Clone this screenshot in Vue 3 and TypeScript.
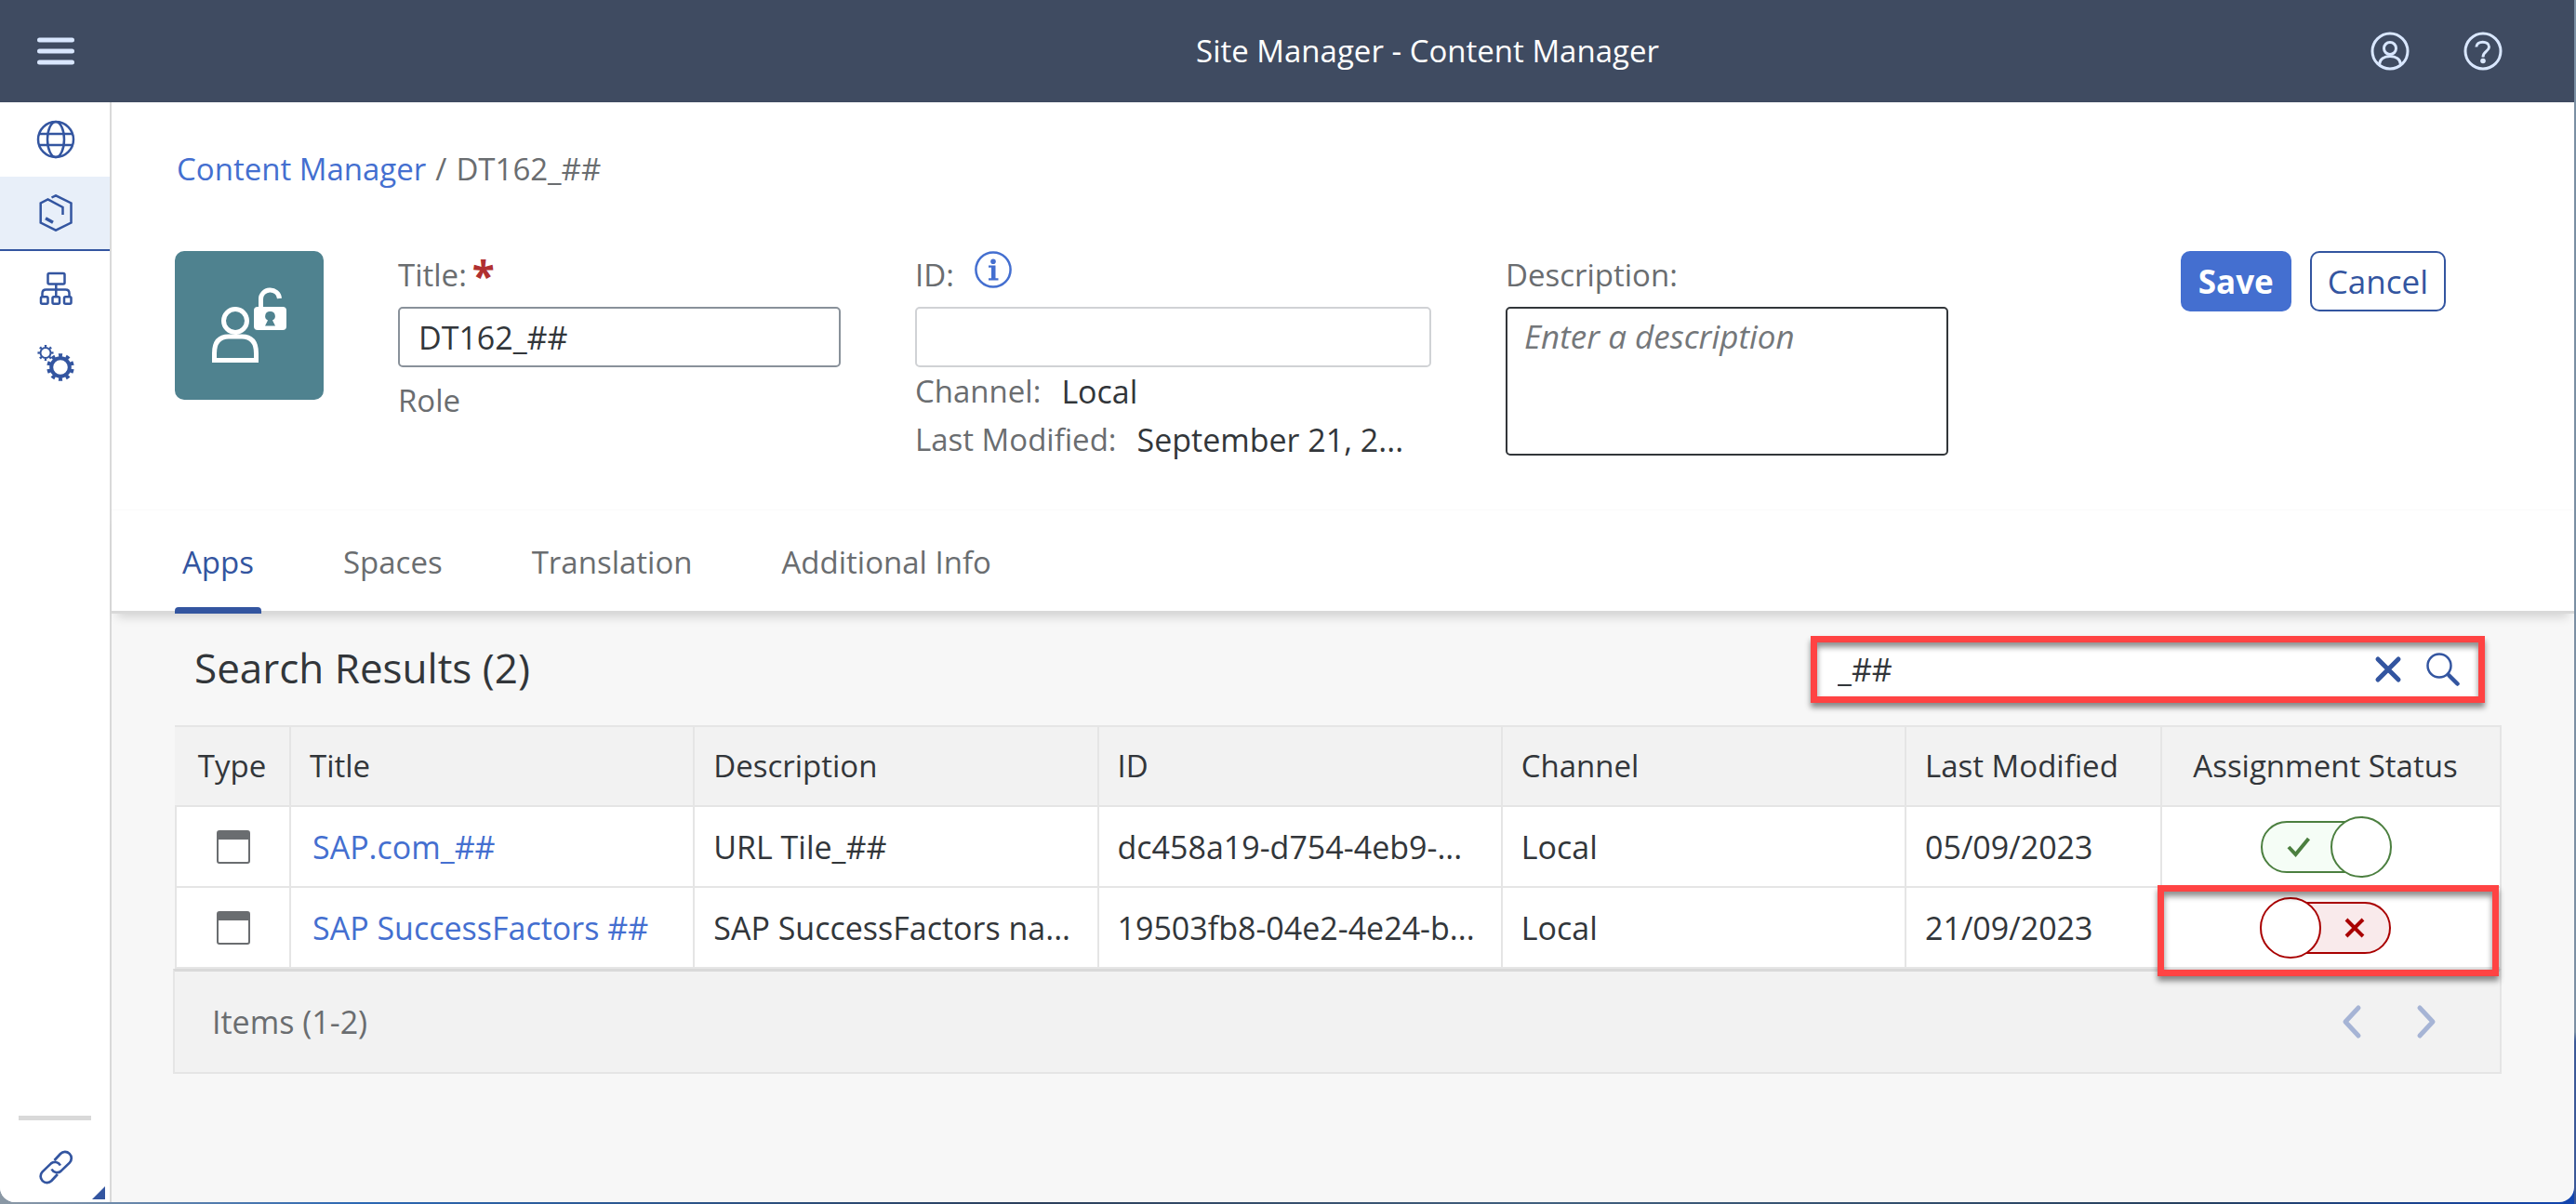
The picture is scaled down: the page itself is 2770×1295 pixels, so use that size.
<script setup lang="ts">
import { ref } from 'vue'

interface AppRow {
  title: string
  description: string
  id: string
  channel: string
  modified: string
  assigned: boolean
}

const title = ref('DT162_##')
const itemId = ref('')
const description = ref('')
const query = ref('_##')
const activeTab = ref('Apps')
const tabs: string[] = ['Apps', 'Spaces', 'Translation', 'Additional Info']

const rows = ref<AppRow[]>([
  {
    title: 'SAP.com_##',
    description: 'URL Tile_##',
    id: 'dc458a19-d754-4eb9-...',
    channel: 'Local',
    modified: '05/09/2023',
    assigned: true,
  },
  {
    title: 'SAP SuccessFactors ##',
    description: 'SAP SuccessFactors na...',
    id: '19503fb8-04e2-4e24-b...',
    channel: 'Local',
    modified: '21/09/2023',
    assigned: false,
  },
])
</script>

<template>
  <div class="window">
    <header class="shell">
      <div class="shell-start">
        <button class="icon-btn" type="button" aria-label="Menu">
          <svg width="40" height="40" viewBox="0 0 40 40" fill="none" stroke="currentColor" stroke-width="5" stroke-linecap="round">
            <path d="M2.500 8H37.500M2.500 20H37.500M2.500 32H37.500" />
          </svg>
        </button>
      </div>
      <h1 class="shell-title">Site Manager - Content Manager</h1>
      <div class="shell-end">
        <button class="icon-btn" type="button" aria-label="Profile">
          <svg width="42" height="42" viewBox="-1 -1 42 42" fill="none" stroke="currentColor" stroke-width="3">
            <circle cx="20" cy="20" r="19" />
            <circle cx="20" cy="17" r="6.500" />
            <path d="M8.500 34.500C9 28.500 14 25.500 20 25.500S31 28.500 31.500 34.500" />
          </svg>
        </button>
        <button class="icon-btn" type="button" aria-label="Help">
          <svg width="42" height="42" viewBox="-1 -1 42 42" fill="none" stroke="currentColor" stroke-width="3">
            <circle cx="20" cy="20" r="19" />
            <path d="M12.800 15.500C13 8.500 26.500 8.500 26.500 15.500C26.500 20.500 20 20 20 26.500" />
            <circle cx="20" cy="30.500" r="2.800" fill="currentColor" stroke="none" />
          </svg>
        </button>
      </div>
    </header>

    <div class="body">
      <nav class="side" aria-label="Main">
        <a class="side-item" href="#sites" aria-label="Site Directory">
          <svg width="42" height="42" viewBox="-1 -1 42 42" fill="none" stroke="currentColor" stroke-width="2.500">
            <circle cx="20" cy="20" r="19" />
            <ellipse cx="20" cy="20" rx="9" ry="19" />
            <path d="M2 14H38M2 26H38" />
          </svg>
        </a>
        <a class="side-item current" href="#content" aria-label="Content Manager">
          <svg width="40" height="40" viewBox="0 0 40 40" fill="none" stroke="currentColor" stroke-width="2.500">
            <path d="M15.500 3.500L20 1.300L36.500 9.500V30.500L20 38.700L3.700 30.500V9.500L11.500 5.300L27.500 14V22" />
            <path d="M9 25.800L17 30.200" stroke-width="3.500" />
          </svg>
        </a>
        <a class="side-item" href="#channels" aria-label="Channel Manager">
          <svg width="40" height="40" viewBox="0 0 40 40" fill="none" stroke="currentColor" stroke-width="2.500">
            <rect x="11.500" y="4" width="18" height="11.500" rx="1.500" />
            <path d="M20.300 15.500V29M5.500 29V25.500Q5.500 21.500 9.500 21.500H30.500Q34.500 21.500 34.500 25.500V29" />
            <rect x="4" y="29.300" width="7.500" height="7.500" rx="1.500" />
            <rect x="16.500" y="29.300" width="7.500" height="7.500" rx="1.500" />
            <rect x="29" y="29.300" width="7.500" height="7.500" rx="1.500" />
          </svg>
        </a>
        <a class="side-item" href="#settings" aria-label="Settings">
          <svg width="40" height="40" viewBox="0 0 40 40" fill="none" stroke="currentColor">
            <circle cx="9" cy="9.500" r="5.500" stroke-width="2" />
            <circle cx="9" cy="9.500" r="7.300" stroke-width="2.500" pathLength="16" stroke-dasharray="0.800 1.200" stroke-dashoffset="0.400" />
            <circle cx="25" cy="25" r="9.800" stroke-width="4" />
            <circle cx="25" cy="25" r="12.800" stroke-width="4" pathLength="20" stroke-dasharray="1 1" stroke-dashoffset="1.500" />
          </svg>
        </a>
        <div class="side-foot">
          <hr class="side-rule" />
          <a class="side-link" href="#links" aria-label="Useful Links">
            <svg width="40" height="40" viewBox="0 0 40 40" fill="none" stroke="currentColor" stroke-width="2.700">
              <path d="M18.500 13L25 6A6.800 6.800 0 0 1 34.800 15.600L25.500 24.600A6.500 6.500 0 0 1 15.500 22.500" />
              <path d="M18.500 13L25 6A6.800 6.800 0 0 1 34.800 15.600L25.500 24.600A6.500 6.500 0 0 1 15.500 22.500" transform="rotate(180 20.200 20.500)" />
            </svg>
          </a>
        </div>
      </nav>

      <main class="main">
        <section class="object">
          <nav class="crumbs" aria-label="Breadcrumb">
            <a href="#content">Content Manager</a>
            <span>/</span>
            <span>DT162_##</span>
          </nav>
          <form class="form" @submit.prevent>
            <div class="avatar">
              <svg viewBox="0 0 160 160" fill="none" stroke="#fff" stroke-width="5">
                <circle cx="65" cy="75" r="12.500" />
                <path d="M42.500 117.500V110Q42.500 92 58 92H72Q87.500 92 87.500 110V117.500Z" />
                <path d="M92.500 61V52A10 9.500 0 0 1 112.500 51" />
                <rect x="85" y="60" width="35" height="25" rx="4" fill="#fff" stroke="none" />
                <path d="M102.500 65A5 5 0 0 0 100 74.500L97 80.500H108L105 74.500A5 5 0 0 0 102.500 65Z" fill="#4f828f" stroke="none" />
              </svg>
            </div>
            <div class="field">
              <label class="label" for="title">Title:<span class="star">*</span></label>
              <input id="title" v-model="title" class="input" type="text" />
              <p class="line role">Role</p>
            </div>
            <div class="field">
              <div class="label">
                <label for="item-id">ID:</label>
                <button class="info" type="button" aria-label="About the ID">
                  <svg width="40" height="40" viewBox="0 0 40 40">
                    <circle cx="20" cy="20" r="18.600" fill="none" stroke="currentColor" stroke-width="2.500" />
                    <circle cx="20" cy="11.300" r="2.800" fill="currentColor" />
                    <path d="M15 15.500H22.500V29.300H25.500V31.500H15V29.300H18V17.700H15Z" fill="currentColor" />
                  </svg>
                </button>
              </div>
              <input id="item-id" v-model="itemId" class="input readonly" type="text" readonly />
              <p class="line pair"><span>Channel:</span><span class="value">Local</span></p>
              <p class="line pair"><span>Last Modified:</span><span class="value">September 21, 2...</span></p>
            </div>
            <div class="field">
              <label class="label" for="description">Description:</label>
              <textarea id="description" v-model="description" class="input area" placeholder="Enter a description"></textarea>
            </div>
            <div class="actions">
              <button class="btn primary" type="submit">Save</button>
              <button class="btn" type="button">Cancel</button>
            </div>
          </form>
        </section>

        <div class="tabs" role="tablist">
          <button
            v-for="tab in tabs"
            :key="tab"
            class="tab"
            :class="{ active: tab === activeTab }"
            type="button"
            role="tab"
            :aria-selected="tab === activeTab"
            @click="activeTab = tab"
          >{{ tab }}</button>
        </div>

        <section class="results">
          <div class="toolbar">
            <h2>Search Results (2)</h2>
            <div class="search marked">
              <input v-model="query" class="query" type="text" aria-label="Search" />
              <button class="search-btn" type="button" aria-label="Clear" @click="query = ''">
                <svg width="30" height="30" viewBox="0 0 30 30" fill="none" stroke="currentColor" stroke-width="5" stroke-linecap="round">
                  <path d="M4 4L26 26M26 4L4 26" />
                </svg>
              </button>
              <button class="search-btn" type="button" aria-label="Search">
                <svg width="36" height="36" viewBox="0 0 36 36" fill="none" stroke="currentColor" stroke-linecap="round">
                  <circle cx="14" cy="14" r="12.500" stroke-width="2.500" />
                  <path d="M24.500 24.500L33.500 33.500" stroke-width="4.500" />
                </svg>
              </button>
            </div>
          </div>

          <table class="table">
            <colgroup>
              <col class="c-type" /><col /><col /><col /><col /><col class="c-date" /><col class="c-status" />
            </colgroup>
            <thead>
              <tr>
                <th class="mid">Type</th>
                <th>Title</th>
                <th>Description</th>
                <th>ID</th>
                <th>Channel</th>
                <th>Last Modified</th>
                <th class="mid status">Assignment Status</th>
              </tr>
            </thead>
            <tbody>
              <tr v-for="row in rows" :key="row.id">
                <td class="mid">
                  <svg class="type-icon" width="36" height="36" viewBox="0 0 36 36">
                    <rect x="1" y="1" width="34" height="34" rx="2" fill="none" stroke="#6a6d70" stroke-width="2" />
                    <path d="M1 1H35V10H1Z" fill="#6a6d70" />
                  </svg>
                </td>
                <td><a href="#app">{{ row.title }}</a></td>
                <td>{{ row.description }}</td>
                <td>{{ row.id }}</td>
                <td>{{ row.channel }}</td>
                <td>{{ row.modified }}</td>
                <td class="mid status" :class="{ flagged: !row.assigned }">
                  <label class="switch" :class="row.assigned ? 'on' : 'off'">
                    <input v-model="row.assigned" type="checkbox" :aria-label="'Assign ' + row.title" />
                    <svg v-if="row.assigned" class="mark" width="26" height="24" viewBox="0 0 26 24" fill="none" stroke="currentColor" stroke-width="4">
                      <path d="M2 12L9.500 20L23.500 3" />
                    </svg>
                    <svg v-else class="mark" width="22" height="22" viewBox="0 0 22 22" fill="none" stroke="currentColor" stroke-width="4">
                      <path d="M2 2L20 20M20 2L2 20" />
                    </svg>
                    <span class="knob"></span>
                  </label>
                </td>
              </tr>
            </tbody>
          </table>

          <footer class="pager">
            <span>Items (1-2)</span>
            <div class="pager-nav">
              <button type="button" aria-label="Previous page" disabled>
                <svg width="22" height="38" viewBox="0 0 22 38" fill="none" stroke="currentColor" stroke-width="5" stroke-linecap="round" stroke-linejoin="round">
                  <path d="M18 4L4 19L18 34" />
                </svg>
              </button>
              <button type="button" aria-label="Next page" disabled>
                <svg width="22" height="38" viewBox="0 0 22 38" fill="none" stroke="currentColor" stroke-width="5" stroke-linecap="round" stroke-linejoin="round">
                  <path d="M4 4L18 19L4 34" />
                </svg>
              </button>
            </div>
          </footer>
        </section>
      </main>
    </div>
  </div>
</template>

<style>
body {
  margin: 0;
}
#app {
  box-sizing: border-box;
  min-height: 100vh;
  display: flex;
  padding: 0 2px 2px 0;
  background:
    linear-gradient(#7b8fa3 0 1110px, #3a5898 1120px) right / 2px 100% no-repeat,
    linear-gradient(90deg, #8b98a5, #2b68b4 14%, #2b3f5c 40%, #41607f 60%, #26405f 85%, #1245b0);
}
</style>

<style scoped>
.window {
  flex: 1;
  min-width: 0;
  display: flex;
  flex-direction: column;
  overflow: hidden;
  border-radius: 0 0 16px 16px;
  background: #f7f7f7;
  color: #32363a;
  font-family: 'Open Sans', 'Noto Sans', sans-serif;
  font-size: 33px;
  line-height: 52px;
}
button,
input,
textarea {
  box-sizing: border-box;
  margin: 0;
  font: inherit;
  color: inherit;
}
button {
  padding: 0;
  border: 0;
  background: none;
}
svg {
  display: block;
}
a {
  color: #446fd0;
  text-decoration: none;
}
h1,
h2,
p {
  margin: 0;
  font-weight: 400;
}

.shell {
  display: grid;
  grid-template-columns: 552px 1fr 250px;
  align-items: center;
  height: 110px;
  background: #3f4b61;
  color: #d9e7ff;
}
.shell-start {
  padding-left: 40px;
}
.shell-title {
  color: #fff;
  font-size: 33px;
  text-align: center;
}
.shell-end {
  display: flex;
  gap: 58px;
  padding-left: 31px;
}
.icon-btn {
  display: block;
}

.body {
  flex: 1;
  display: flex;
}
.side {
  display: flex;
  flex-direction: column;
  flex: none;
  width: 118px;
  border-right: 2px solid #d9d9d9;
  background: #fff;
}
.side-item {
  box-sizing: border-box;
  display: grid;
  place-items: center;
  height: 80px;
  padding-left: 2px;
  color: #3355a0;
}
.side-item.current {
  border-bottom: 2px solid #3355a0;
  background: #e8eff9;
}
.side-foot {
  position: relative;
  margin-top: auto;
}
.side-foot::after {
  content: '';
  position: absolute;
  right: 5px;
  bottom: 3px;
  border: 7px solid #3355a0;
  border-top-color: transparent;
  border-left-color: transparent;
}
.side-rule {
  height: 5px;
  margin: 0 20px;
  border: 0;
  background: #d9d9d9;
}
.side-link {
  display: grid;
  place-items: center;
  padding: 30px 0 18px 2px;
  color: #3355a0;
}

.main {
  flex: 1;
  min-width: 0;
}
.object {
  padding: 46px 138px 49px 68px;
  background: #fff;
}
.crumbs {
  display: flex;
  gap: 10px;
  padding-left: 2px;
  margin-bottom: 62px;
  color: #6a6d70;
}
.form {
  display: grid;
  grid-template-columns: 160px 476fr 555fr 476fr 455fr;
  column-gap: 80px;
  align-items: start;
}
.avatar {
  height: 160px;
  border-radius: 10px;
  background: #4f828f;
}
.field {
  min-width: 0;
  color: #6a6d70;
}
.label {
  display: flex;
  height: 52px;
  margin-bottom: 8px;
}
.star {
  margin-left: 6px;
  color: #b03030;
  font-size: 44px;
  font-weight: 700;
}
.info {
  width: 40px;
  height: 40px;
  margin-left: 22px;
  color: #446fd0;
}
.input {
  display: block;
  width: 100%;
  height: 65px;
  padding: 0 20px;
  border: 2px solid #89919a;
  border-radius: 5px;
  background: #fff;
  color: #32363a;
  font-size: 34px;
}
.input.readonly {
  border-color: #d0d2d5;
}
.input.area {
  height: 160px;
  padding: 8px 18px;
  border-color: #32363a;
  font-size: 35px;
  line-height: 44px;
  resize: none;
}
.area::placeholder {
  color: #74777a;
  font-style: italic;
  opacity: 1;
}
.role {
  padding-top: 10px;
}
.pair {
  display: flex;
  gap: 22px;
  white-space: nowrap;
}
.value {
  color: #32363a;
  font-size: 34px;
}
.actions {
  display: flex;
  justify-content: flex-end;
  gap: 20px;
}
.btn {
  height: 65px;
  padding: 0 17px;
  border: 2px solid #3355a0;
  border-radius: 10px;
  background: #fff;
  color: #3355a0;
  font-size: 35px;
}
.btn.primary {
  border-color: #446fd0;
  background: #446fd0;
  color: #fff;
  font-weight: 700;
}

.tabs {
  position: relative;
  display: flex;
  gap: 80px;
  height: 108px;
  padding: 0 60px 0 68px;
  border-top: 1px solid #fafafa;
  border-bottom: 3px solid #d9d9d9;
  background: #fff;
  box-shadow: 0 10px 10px -6px rgba(0, 0, 0, 0.14);
}
.tab {
  position: relative;
  padding: 4px 8px 0;
  color: #6a6d70;
}
.tab.active {
  color: #3355a0;
}
.tab.active::after {
  content: '';
  position: absolute;
  right: 0;
  bottom: -3px;
  left: 0;
  height: 7px;
  border-radius: 4px 4px 0 0;
  background: #3355a0;
}

.results {
  padding: 0 78px 60px 68px;
}
.toolbar {
  display: flex;
  align-items: center;
  justify-content: space-between;
  height: 120px;
  padding: 0 18px 0 21px;
}
h2 {
  padding-bottom: 4px;
  font-size: 44px;
}
.search {
  box-sizing: border-box;
  display: flex;
  align-items: center;
  gap: 26px;
  width: 725px;
  height: 72px;
  padding: 0 20px 0 22px;
  background: #fff;
  color: #3355a0;
}
.marked,
.flagged::after {
  border: 7px solid #ff4343;
  box-shadow:
    0 5px 6px rgba(0, 0, 0, 0.45),
    inset 0 5px 6px rgba(0, 0, 0, 0.45);
}
.query {
  flex: 1;
  min-width: 0;
  padding: 0;
  border: 0;
  outline: 0;
  background: none;
  color: #32363a;
  font-size: 34px;
}

.table {
  width: 100%;
  table-layout: fixed;
  border-collapse: separate;
  border-spacing: 0;
}
.c-type {
  width: 125px;
}
.c-date {
  width: 275px;
}
.c-status {
  width: 365px;
}
th,
td {
  box-sizing: border-box;
  height: 87px;
  padding: 0 20px;
  border-right: 2px solid #e5e5e5;
  border-bottom: 2px solid #e5e5e5;
  font-weight: 400;
  text-align: left;
  white-space: nowrap;
}
th {
  height: 88px;
  border-top: 2px solid #e5e5e5;
  background: #f2f2f2;
}
td {
  background: #fff;
  font-size: 34px;
}
td:first-child {
  border-left: 2px solid #e5e5e5;
}
td a {
  padding-left: 3px;
}
th.mid,
td.mid {
  text-align: center;
}
.type-icon {
  margin: 0 auto;
}
th.status,
td.status {
  position: relative;
  padding-right: 32px;
}
.flagged::after {
  content: '';
  position: absolute;
  inset: -3px 1px -10px -5px;
  z-index: 1;
  pointer-events: none;
}
.switch {
  box-sizing: border-box;
  position: relative;
  display: flex;
  align-items: center;
  width: 140px;
  height: 56px;
  margin: 0 auto;
  padding: 0 26px;
  border: 2px solid;
  border-radius: 28px;
}
.switch.on {
  background: #f5fdf6;
  color: #4b7f3f;
}
.switch.off {
  justify-content: flex-end;
  background: #f9eaeb;
  color: #a90000;
}
.switch input {
  position: absolute;
  inset: 0;
  width: 100%;
  height: 100%;
  opacity: 0;
}
.knob {
  box-sizing: border-box;
  position: absolute;
  top: -7px;
  width: 66px;
  height: 66px;
  border: 2px solid;
  border-radius: 50%;
  background: #fff;
}
.on .knob {
  right: -3px;
}
.off .knob {
  left: -3px;
}

.pager {
  display: flex;
  align-items: center;
  justify-content: space-between;
  height: 108px;
  margin-left: -2px;
  padding: 0 68px 0 40px;
  border: 2px solid #e5e5e5;
  border-top: 3px solid #d9d9d9;
  background: #f2f2f2;
  color: #6a6d70;
  font-size: 34px;
}
.pager-nav {
  display: flex;
  gap: 58px;
  color: #a6b4d5;
}
.pager-nav button {
  color: inherit;
}
</style>
